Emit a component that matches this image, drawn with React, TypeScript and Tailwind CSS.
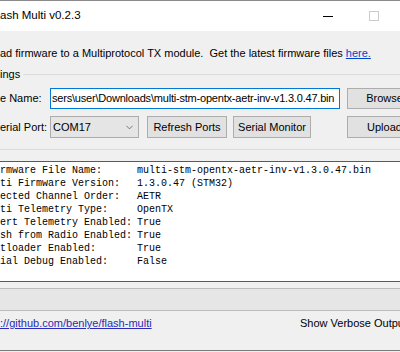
import { ChevronDown } from "lucide-react";

const INFO: [string, string][] = [
  ["rmware File Name:", "multi-stm-opentx-aetr-inv-v1.3.0.47.bin"],
  ["ti Firmware Version:", "1.3.0.47 (STM32)"],
  ["ected Channel Order:", "AETR"],
  ["ti Telemetry Type:", "OpenTX"],
  ["ert Telemetry Enabled:", "True"],
  ["sh from Radio Enabled:", "True"],
  ["tloader Enabled:", "True"],
  ["ial Debug Enabled:", "False"],
];

const Button = ({ label, className }: { label: string; className: string }) => (
  <button
    className={`h-full shrink-0 border border-[#adadad] bg-[#e1e1e1] text-black whitespace-nowrap ${className}`}
  >
    {label}
  </button>
);

export default function App() {
  return (
    <div className="w-[400px] h-[352px] overflow-hidden bg-[#f0f0f0] text-[11px] text-black font-['Liberation_Sans',Arial,sans-serif] flex flex-col">
      {/* title bar */}
      <div className="h-[31px] shrink-0 bg-white border-t border-[#8a8a8a] flex items-center">
        <span className="flex-1 text-[11.5px] leading-none">ash Multi v0.2.3</span>
        <div className="w-[46px] h-full flex items-center justify-center">
          <div className="w-[10px] h-px bg-black" />
        </div>
        <div className="w-[46px] h-full flex items-center justify-center">
          <div className="w-[10px] h-[10px] border border-[#cccccc]" />
        </div>
        <div className="w-[3px]" />
      </div>

      {/* description */}
      <div className="pt-[14px] leading-[16px] whitespace-pre">
        ad firmware to a Multiprotocol TX module.  Get the latest firmware files{" "}
        <span className="text-[#0044cc] underline">here.</span>
      </div>

      {/* settings group */}
      <div className="mt-[6px] h-[15px] flex items-center">
        <span className="leading-none">ings</span>
        <div className="ml-[3px] flex-1 h-px bg-[#dcdcdc]" />
      </div>

      <div className="mt-[6px] h-[21px] flex items-center whitespace-nowrap">
        <span className="w-[50px] shrink-0">e Name:</span>
        <div className="w-[290px] h-full shrink-0 bg-white border border-[#0078d7] flex items-center pl-[1px] overflow-hidden tracking-[-0.2px]">
          sers\user\Downloads\multi-stm-opentx-aetr-inv-v1.3.0.47.bin
        </div>
        <Button label="Browse" className="ml-[7px] w-[75px]" />
      </div>

      <div className="mt-[7px] h-[22px] flex items-center whitespace-nowrap">
        <span className="w-[50px] shrink-0">erial Port:</span>
        <div className="w-[89px] h-full shrink-0 bg-[#e5e5e5] border border-[#acacac] flex items-center justify-between pl-[2px] pr-[3px]">
          <span>COM17</span>
          <ChevronDown size={11} strokeWidth={1.5} className="text-[#444]" />
        </div>
        <Button label="Refresh Ports" className="ml-[8px] w-[80px]" />
        <Button label="Serial Monitor" className="ml-[6px] w-[78px]" />
        <Button label="Upload" className="ml-[36px] w-[75px]" />
      </div>

      <div className="mt-[11px] h-px shrink-0 bg-[#dcdcdc]" />

      {/* output */}
      <div className="mt-[11px] h-[121px] shrink-0 bg-white border-y border-[#5a5a5a] pt-[2px] font-['Liberation_Mono',monospace] text-[10px] leading-[13px] whitespace-pre">
        {INFO.map(([k, v]) => (
          <div key={k} className="flex">
            <span className="w-[137px] shrink-0">{k}</span>
            <span>{v}</span>
          </div>
        ))}
      </div>

      {/* progress */}
      <div className="mt-[6px] h-[23px] shrink-0 bg-[#e6e6e6] border-y border-[#bcbcbc]" />

      {/* footer */}
      <div className="h-[39px] shrink-0 flex items-start pt-[4px] leading-[16px] whitespace-nowrap">
        <span className="flex-1 text-[#2a2ab8] underline">://github.com/benlye/flash-multi</span>
        <span className="w-[100px]">Show Verbose Output</span>
      </div>
      <div className="h-px shrink-0 bg-[#7a7a7a]" />
    </div>
  );
}
